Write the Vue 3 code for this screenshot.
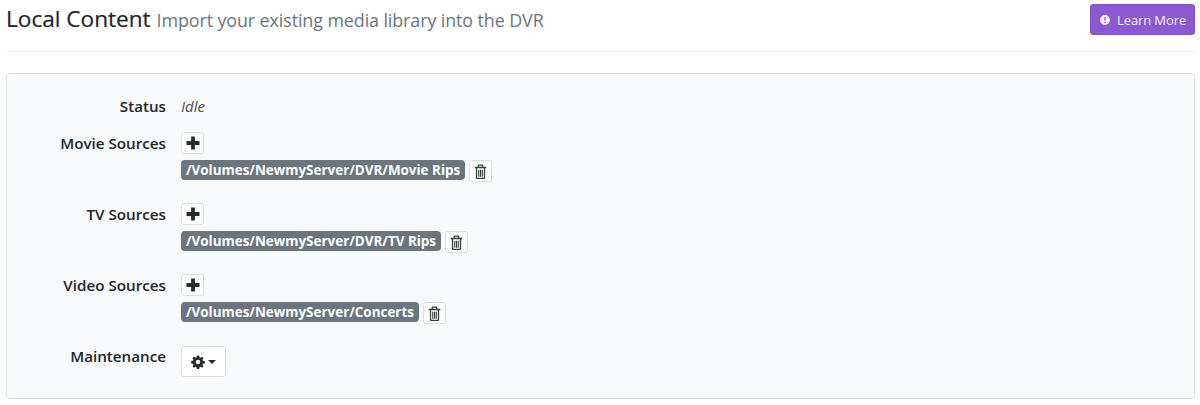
<script setup>
const sources = [
  { label: 'Movie Sources', paths: ['/Volumes/NewmyServer/DVR/Movie Rips'] },
  { label: 'TV Sources', paths: ['/Volumes/NewmyServer/DVR/TV Rips'] },
  { label: 'Video Sources', paths: ['/Volumes/NewmyServer/Concerts'] },
]
</script>

<template>
  <div class="page">
    <header class="page-header">
      <h3 class="title">Local Content <small>Import your existing media library into the DVR</small></h3>
      <button class="learn">
        <svg class="info" viewBox="0 0 16 16" aria-hidden="true">
          <path fill-rule="evenodd" d="M8 0a8 8 0 1 1 0 16A8 8 0 0 1 8 0zM6.9 3.2l.3 6h1.6l.3-6zM8 10.3a1.4 1.4 0 1 0 0 2.8 1.4 1.4 0 0 0 0-2.8z" fill="currentColor" />
        </svg>
        Learn More
      </button>
    </header>

    <section class="well">
      <div class="row status">
        <div class="label">Status</div>
        <div class="value"><em>Idle</em></div>
      </div>

      <div v-for="s in sources" :key="s.label" class="row source">
        <div class="label">{{ s.label }}</div>
        <div class="value">
          <button class="btn square" :aria-label="'Add ' + s.label">
            <svg class="plus" viewBox="0 0 14 14" aria-hidden="true">
              <path d="M5.1 0.5h3.8v4.6h4.6v3.8H8.9v4.6H5.1V8.9H0.5V5.1h4.6z" fill="currentColor" />
            </svg>
          </button>
          <div v-for="p in s.paths" :key="p" class="path-line">
            <span class="badge">{{ p }}</span>
            <button class="btn square trash-btn" aria-label="Remove">
              <svg class="trash" viewBox="0 0 14 16" aria-hidden="true">
                <path d="M5 0.5h4a1 1 0 0 1 1 1V3h3.3v1.6H12V15a1 1 0 0 1-1 1H3a1 1 0 0 1-1-1V4.6H0.7V3H4V1.5a1 1 0 0 1 1-1zM5.3 1.7V3h3.4V1.7zM3.4 4.6v10h7.2v-10z" fill="currentColor" />
                <path d="M4.5 6h1.2v7.6H4.5zM6.4 6h1.2v7.6H6.4zM8.3 6h1.2v7.6H8.3z" fill="currentColor" />
              </svg>
            </button>
          </div>
        </div>
      </div>

      <div class="row">
        <div class="label">Maintenance</div>
        <div class="value">
          <button class="btn gear-btn" aria-label="Maintenance">
            <svg class="gear" viewBox="0 0 16 16" aria-hidden="true">
              <path fill-rule="evenodd" fill="currentColor" d="M6.7 0.5h2.6l.4 2.1 1.1.5 1.8-1.2 1.8 1.8-1.2 1.8.5 1.1 2.1.4v2.6l-2.1.4-.5 1.1 1.2 1.8-1.8 1.8-1.8-1.2-1.1.5-.4 2.1H6.7l-.4-2.1-1.1-.5-1.8 1.2-1.8-1.8 1.2-1.8-.5-1.1-2.1-.4V6.9l2.1-.4.5-1.1-1.2-1.8 1.8-1.8 1.8 1.2 1.1-.5zM8 5.4a2.6 2.6 0 1 0 0 5.2 2.6 2.6 0 0 0 0-5.2z" />
            </svg>
            <span class="caret"></span>
          </button>
        </div>
      </div>
    </section>
  </div>
</template>

<style scoped>
.page {
  width: 1200px;
  height: 405px;
  box-sizing: border-box;
  padding: 4px 5px 0 6px;
  font-family: "Open Sans", "Noto Sans", sans-serif;
  color: #212529;
  background: #fff;
  overflow: hidden;
}
.page-header {
  display: flex;
  justify-content: space-between;
  align-items: flex-start;
  height: 47px;
  border-bottom: 1px solid #f0f1f2;
}
.title {
  margin: -2px 0 0;
  font-size: 22.6px;
  font-weight: 400;
  line-height: 33px;
  -webkit-text-stroke: 0.2px #212529;
}
.title small {
  font-size: 17.9px;
  color: #6c757d;
  letter-spacing: -0.1px;
  -webkit-text-stroke: 0;
}
.learn {
  display: flex;
  align-items: center;
  gap: 7px;
  width: 105px;
  height: 31px;
  padding: 0 0 0 9px;
  box-sizing: border-box;
  border: 1px solid #8553c9;
  border-radius: 3px;
  background: #8a58cf;
  color: #f3ecfb;
  font: inherit;
  font-size: 13px;
  letter-spacing: -0.1px;
}
.info {
  width: 10px;
  height: 10px;
  flex: none;
}
.well {
  margin-top: 21px;
  height: 326px;
  box-sizing: border-box;
  padding: 20px 0 0;
  background: #f8f9fa;
  border: 1px solid #dfe1e3;
  border-radius: 4px;
}
.row {
  display: grid;
  grid-template-columns: 159px 1fr;
  column-gap: 15px;
}
.status {
  height: 38px;
}
.status .label,
.status .value {
  line-height: 24px;
}
.source {
  height: 71px;
}
.label {
  font-size: 15.2px;
  font-weight: 600;
  text-align: right;
  line-height: 22px;
}
.value {
  font-size: 15px;
  color: #495057;
}
.btn {
  display: flex;
  align-items: center;
  justify-content: center;
  padding: 0;
  box-sizing: border-box;
  background: #fff;
  border: 1px solid #dcdfe2;
  border-radius: 3px;
  color: #292c2f;
}
.square {
  width: 23px;
  height: 22px;
}
.plus {
  width: 14px;
  height: 14px;
}
.path-line {
  display: flex;
  align-items: flex-start;
  gap: 4px;
  margin-top: 6px;
}
.badge {
  height: 20px;
  padding: 0 5px;
  border-radius: 4px;
  background: #6c757d;
  color: #fff;
  font-size: 13.45px;
  font-weight: 700;
  line-height: 20px;
  white-space: nowrap;
}
.trash {
  width: 13px;
  height: 15px;
  color: #3a3d40;
}
.gear-btn {
  gap: 3px;
  width: 45px;
  height: 31px;
  margin-top: 1px;
}
.gear {
  width: 14px;
  height: 14px;
}
.caret {
  width: 0;
  height: 0;
  border-top: 4px solid #292c2f;
  border-left: 4px solid transparent;
  border-right: 4px solid transparent;
}
</style>
